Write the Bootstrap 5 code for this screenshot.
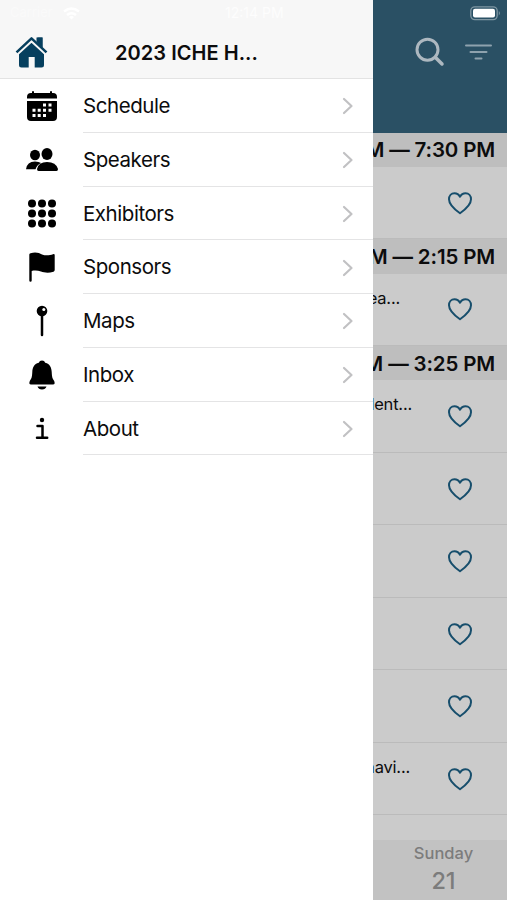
<!DOCTYPE html>
<html lang="en">
<head>
<meta charset="utf-8">
<meta name="viewport" content="width=device-width, initial-scale=1">
<title>2023 ICHE</title>
<link href="https://cdn.jsdelivr.net/npm/bootstrap@5.3.0/dist/css/bootstrap.min.css" rel="stylesheet">
<style>
body{font-family:Inter,"Liberation Sans",sans-serif;color:#0c0c0d;height:900px;line-height:1.2}
.drawer{width:373px;background:#fff}
.drawer-head{height:79px;background:#f7f7f7;border-bottom:1px solid #e3e3e3}
.status{height:26px;font-size:14px;color:#fdfdfd;padding-left:10px}
.carrier{width:53px;color:#fafafa;font-size:13px}
.clock{margin-left:145px}
.toolbar{height:52px}
.brand{width:33px;height:33px;margin-left:15px}
.head-title{font-size:20px;font-weight:600;margin-left:67px;letter-spacing:.05px;padding-top:1px}
.entry{height:53.75px;padding-left:26px}
.entry-icon{width:32px;height:32px}
.entry-body{margin-left:25px;padding:2px 19px 0 0;border-bottom:1px solid #e4e4e5;font-size:20.5px;letter-spacing:-.45px}
.agenda{background:#cbcbcb}
.agenda-head{height:132.5px;background:#2a5064}
.agenda-tools{height:52px;padding-right:14px;gap:18px}
.slot{height:34.3px;background:#bebebe;font-size:20.5px;font-weight:600;padding:2px 12px 0 0;letter-spacing:-.15px}
.talk{height:72.5px;border-bottom:1px solid #bbb}
.talk-title{width:39px;padding-top:15px;font-size:16.5px;letter-spacing:-.2px}
.talk-title.short{width:27px}
.talk-title.mid{width:37px}
.fav{width:26px;height:24px;margin-right:34px;stroke:#174e6c}
.day{height:60px;background:#c2c2c2;color:#7c7c7c;padding-left:7px}
.day-name{font-size:16.5px;font-weight:500;line-height:20px;padding-top:3px}
.day-num{font-size:23.5px;font-weight:500;line-height:28px;padding-top:4px}
</style>
<script src="https://cdn.jsdelivr.net/npm/bootstrap@5.3.0/dist/js/bootstrap.bundle.min.js"></script>
</head>
<body class="d-flex overflow-hidden m-0">
<svg class="d-none">
<symbol id="heart" viewBox="0 0 26 24"><path d="M13 22.3C8 18.8 2 14 2 8.3C2 4.7 4.4 2.200 7.400 2.200C9.900 2.200 11.900 3.500 13 5.700C14.100 3.500 16.100 2.200 18.600 2.200C21.600 2.200 24 4.700 24 8.300C24 14 18 18.800 13 22.300Z" fill="none" stroke-width="2" stroke-linejoin="round"/></symbol>
<symbol id="chev" viewBox="0 0 12 18"><path d="M2 2L9.500 9L2 16" fill="none" stroke="#c1c1c3" stroke-width="2.200" stroke-linecap="round" stroke-linejoin="round"/></symbol>
</svg>

<nav class="drawer flex-shrink-0">
<header class="drawer-head">
<div class="status d-flex align-items-center">
<span class="carrier">Carrier</span>
<svg width="17" height="13" viewBox="0 0 17 13" fill="none" stroke="#fff" stroke-width="2.400"><path d="M1 4.500Q8.500-1.500 16 4.500M4 8Q8.500 4.300 13 8"/><path d="M6 10Q8.500 8 11 10L8.500 12.500Z" fill="#fff" stroke="none"/></svg>
<span class="clock">12:14 PM</span>
</div>
<div class="toolbar d-flex align-items-center">
<svg class="brand flex-shrink-0" viewBox="0 0 33 33"><g fill="#063f5e"><path d="M4 17L16.500 5.500L29 17V29Q29 31.500 26.500 31.500H19.700V21H13.700V31.500H6.500Q4 31.500 4 29Z"/><path d="M21.500 1.500H27.500V13L21.500 8Z"/></g><path d="M1.500 17.800L16.500 4L31.500 17.800" fill="none" stroke="#f7f7f7" stroke-width="4.200"/><path d="M22.500 1.500H27.500V12L22.500 7Z" fill="#063f5e"/><path d="M1.500 16.300L16.500 2.300L31.500 16.300" fill="none" stroke="#063f5e" stroke-width="2.500" stroke-linejoin="round"/></svg>
<h1 class="head-title mb-0">2023 ICHE H...</h1>
</div>
</header>

<div class="entry d-flex"><svg class="entry-icon flex-shrink-0 align-self-center" viewBox="0 0 32 32"><path d="M1 8V7Q1 3 5 3H27Q31 3 31 7V8.500H1ZM1 11H31V27Q31 31 27 31H5Q1 31 1 27Z"/><path d="M7 2V5M25 2V5" stroke="#000" stroke-width="2" stroke-linecap="round"/><path d="M17 13.500h3v3h-3zM22.500 13.500h3v3h-3zM6.500 18.800h3v3h-3zM11.700 18.800h3v3h-3zM17 18.800h3v3h-3zM22.500 18.800h3v3h-3zM6.500 24h3v3h-3zM11.700 24h3v3h-3zM17 24h3v3h-3z" fill="#fff"/></svg>
<div class="entry-body d-flex align-items-center flex-grow-1"><span class="flex-grow-1">Schedule</span><svg width="12" height="18"><use href="#chev"/></svg></div></div>
<div class="entry d-flex"><svg class="entry-icon flex-shrink-0 align-self-center" viewBox="0 0 32 32"><ellipse cx="9" cy="11" rx="5" ry="5.300"/><path d="M0 25.300Q1 17.500 9 17.500Q13 17.500 15 19Q10.500 21.500 9.500 25.300Z"/><ellipse cx="21" cy="10" rx="5.500" ry="6"/><path d="M11 25Q12.500 18 21 18Q30 18 32 25Q32 27 30.500 27H12.500Q11 27 11 25Z"/></svg>
<div class="entry-body d-flex align-items-center flex-grow-1"><span class="flex-grow-1">Speakers</span><svg width="12" height="18"><use href="#chev"/></svg></div></div>
<div class="entry d-flex"><svg class="entry-icon flex-shrink-0 align-self-center" viewBox="0 0 32 32"><g><circle cx="6" cy="6.500" r="4"/><circle cx="16" cy="6.500" r="4"/><circle cx="26" cy="6.500" r="4"/><circle cx="6" cy="16.500" r="4"/><circle cx="16" cy="16.500" r="4"/><circle cx="26" cy="16.500" r="4"/><circle cx="6" cy="26.500" r="4"/><circle cx="16" cy="26.500" r="4"/><circle cx="26" cy="26.500" r="4"/></g></svg>
<div class="entry-body d-flex align-items-center flex-grow-1"><span class="flex-grow-1">Exhibitors</span><svg width="12" height="18"><use href="#chev"/></svg></div></div>
<div class="entry d-flex"><svg class="entry-icon flex-shrink-0 align-self-center" viewBox="0 0 32 32"><path d="M3.300 3.500Q3.300 2.500 4.500 2.200C10 .5 13 2 16 3.400C20 5 24 4.200 27 3.200Q28.700 2.800 28.700 4V19Q28.700 20.300 27.500 20.700C22 22.500 18 21.500 15 20.500C11.500 19.300 8 19.500 5.700 20V29.500Q5.700 30.800 4.500 30.800Q3.300 30.800 3.300 29.500Z"/></svg>
<div class="entry-body d-flex align-items-center flex-grow-1"><span class="flex-grow-1">Sponsors</span><svg width="12" height="18"><use href="#chev"/></svg></div></div>
<div class="entry d-flex"><svg class="entry-icon flex-shrink-0 align-self-center" viewBox="0 0 32 32"><circle cx="16" cy="6" r="5.300"/><path d="M16 10V30" stroke="#000" stroke-width="2.500" stroke-linecap="round"/><circle cx="17.800" cy="4.400" r="1.500" fill="#fff"/></svg>
<div class="entry-body d-flex align-items-center flex-grow-1"><span class="flex-grow-1">Maps</span><svg width="12" height="18"><use href="#chev"/></svg></div></div>
<div class="entry d-flex"><svg class="entry-icon flex-shrink-0 align-self-center" viewBox="0 0 32 32"><path d="M16 1.500Q18.500 1.500 19.200 3.700C24 5 25.500 8.500 25.700 13C26 18.500 26.500 19.500 28.200 22Q29.500 25.500 27 25.500H5Q2.500 25.500 3.800 22C5.500 19.500 6 18.500 6.300 13C6.500 8.500 8 5 12.800 3.700Q13.500 1.500 16 1.500ZM11.500 27.500H20.500Q19.500 30.500 16 30.500Q12.500 30.500 11.500 27.500Z"/></svg>
<div class="entry-body d-flex align-items-center flex-grow-1"><span class="flex-grow-1">Inbox</span><svg width="12" height="18"><use href="#chev"/></svg></div></div>
<div class="entry d-flex"><svg class="entry-icon flex-shrink-0 align-self-center" viewBox="0 0 32 32"><circle cx="16" cy="8" r="2.200"/><path d="M11.500 14H16.500V25.800M11 25.800H21.200" fill="none" stroke="#000" stroke-width="2.500" stroke-linecap="round" stroke-linejoin="round"/></svg>
<div class="entry-body d-flex align-items-center flex-grow-1"><span class="flex-grow-1">About</span><svg width="12" height="18"><use href="#chev"/></svg></div></div>
</nav>

<main class="agenda flex-grow-1 d-flex flex-column overflow-hidden text-nowrap">
<header class="agenda-head flex-shrink-0">
<div class="d-flex justify-content-end pe-1" style="height:26px"><svg width="34" height="26" viewBox="0 0 34 26"><rect x="1.800" y="6.800" width="26.400" height="12.800" rx="4" fill="none" stroke="#7f96a2" stroke-width="1.300"/><rect x="4" y="8.800" width="22" height="8.800" rx="2" fill="#fff"/><path d="M29.800 11Q32 13 29.800 15.500Z" fill="#7f96a2"/></svg></div>
<div class="agenda-tools d-flex justify-content-end align-items-center">
<svg width="30" height="30" viewBox="0 0 30 30" fill="none" stroke="#adb8c0" stroke-linecap="round"><circle cx="12.500" cy="12.700" r="10.500" stroke-width="3"/><path d="M20.500 20.500L27 27" stroke-width="3.500"/></svg>
<svg width="30" height="30" viewBox="0 0 30 30" stroke="#8ea2ae" stroke-width="2" stroke-linecap="round"><path d="M3 8.500H28M7.500 15H23.500M12.500 21.500H18.500"/></svg>
</div>
</header>
<div class="slot flex-shrink-0 d-flex align-items-center justify-content-end">M — 7:30 PM</div>
<div class="talk flex-shrink-0 d-flex justify-content-between"><div class="talk-title"></div><svg class="fav align-self-center"><use href="#heart"/></svg></div>
<div class="slot flex-shrink-0 d-flex align-items-center justify-content-end">M — 2:15 PM</div>
<div class="talk flex-shrink-0 d-flex justify-content-between"><div class="talk-title short d-flex justify-content-end">ea...</div><svg class="fav align-self-center"><use href="#heart"/></svg></div>
<div class="slot flex-shrink-0 d-flex align-items-center justify-content-end">M — 3:25 PM</div>
<div class="talk flex-shrink-0 d-flex justify-content-between"><div class="talk-title d-flex justify-content-end">lent...</div><svg class="fav align-self-center"><use href="#heart"/></svg></div>
<div class="talk flex-shrink-0 d-flex justify-content-end"><svg class="fav align-self-center"><use href="#heart"/></svg></div>
<div class="talk flex-shrink-0 d-flex justify-content-end"><svg class="fav align-self-center"><use href="#heart"/></svg></div>
<div class="talk flex-shrink-0 d-flex justify-content-end"><svg class="fav align-self-center"><use href="#heart"/></svg></div>
<div class="talk flex-shrink-0 d-flex justify-content-end"><svg class="fav align-self-center"><use href="#heart"/></svg></div>
<div class="talk flex-shrink-0 d-flex justify-content-between"><div class="talk-title mid d-flex justify-content-end">navi...</div><svg class="fav align-self-center"><use href="#heart"/></svg></div>
<footer class="day mt-auto flex-shrink-0 text-center"><div class="day-name">Sunday</div><div class="day-num">21</div></footer>
</main>
</body>
</html>
